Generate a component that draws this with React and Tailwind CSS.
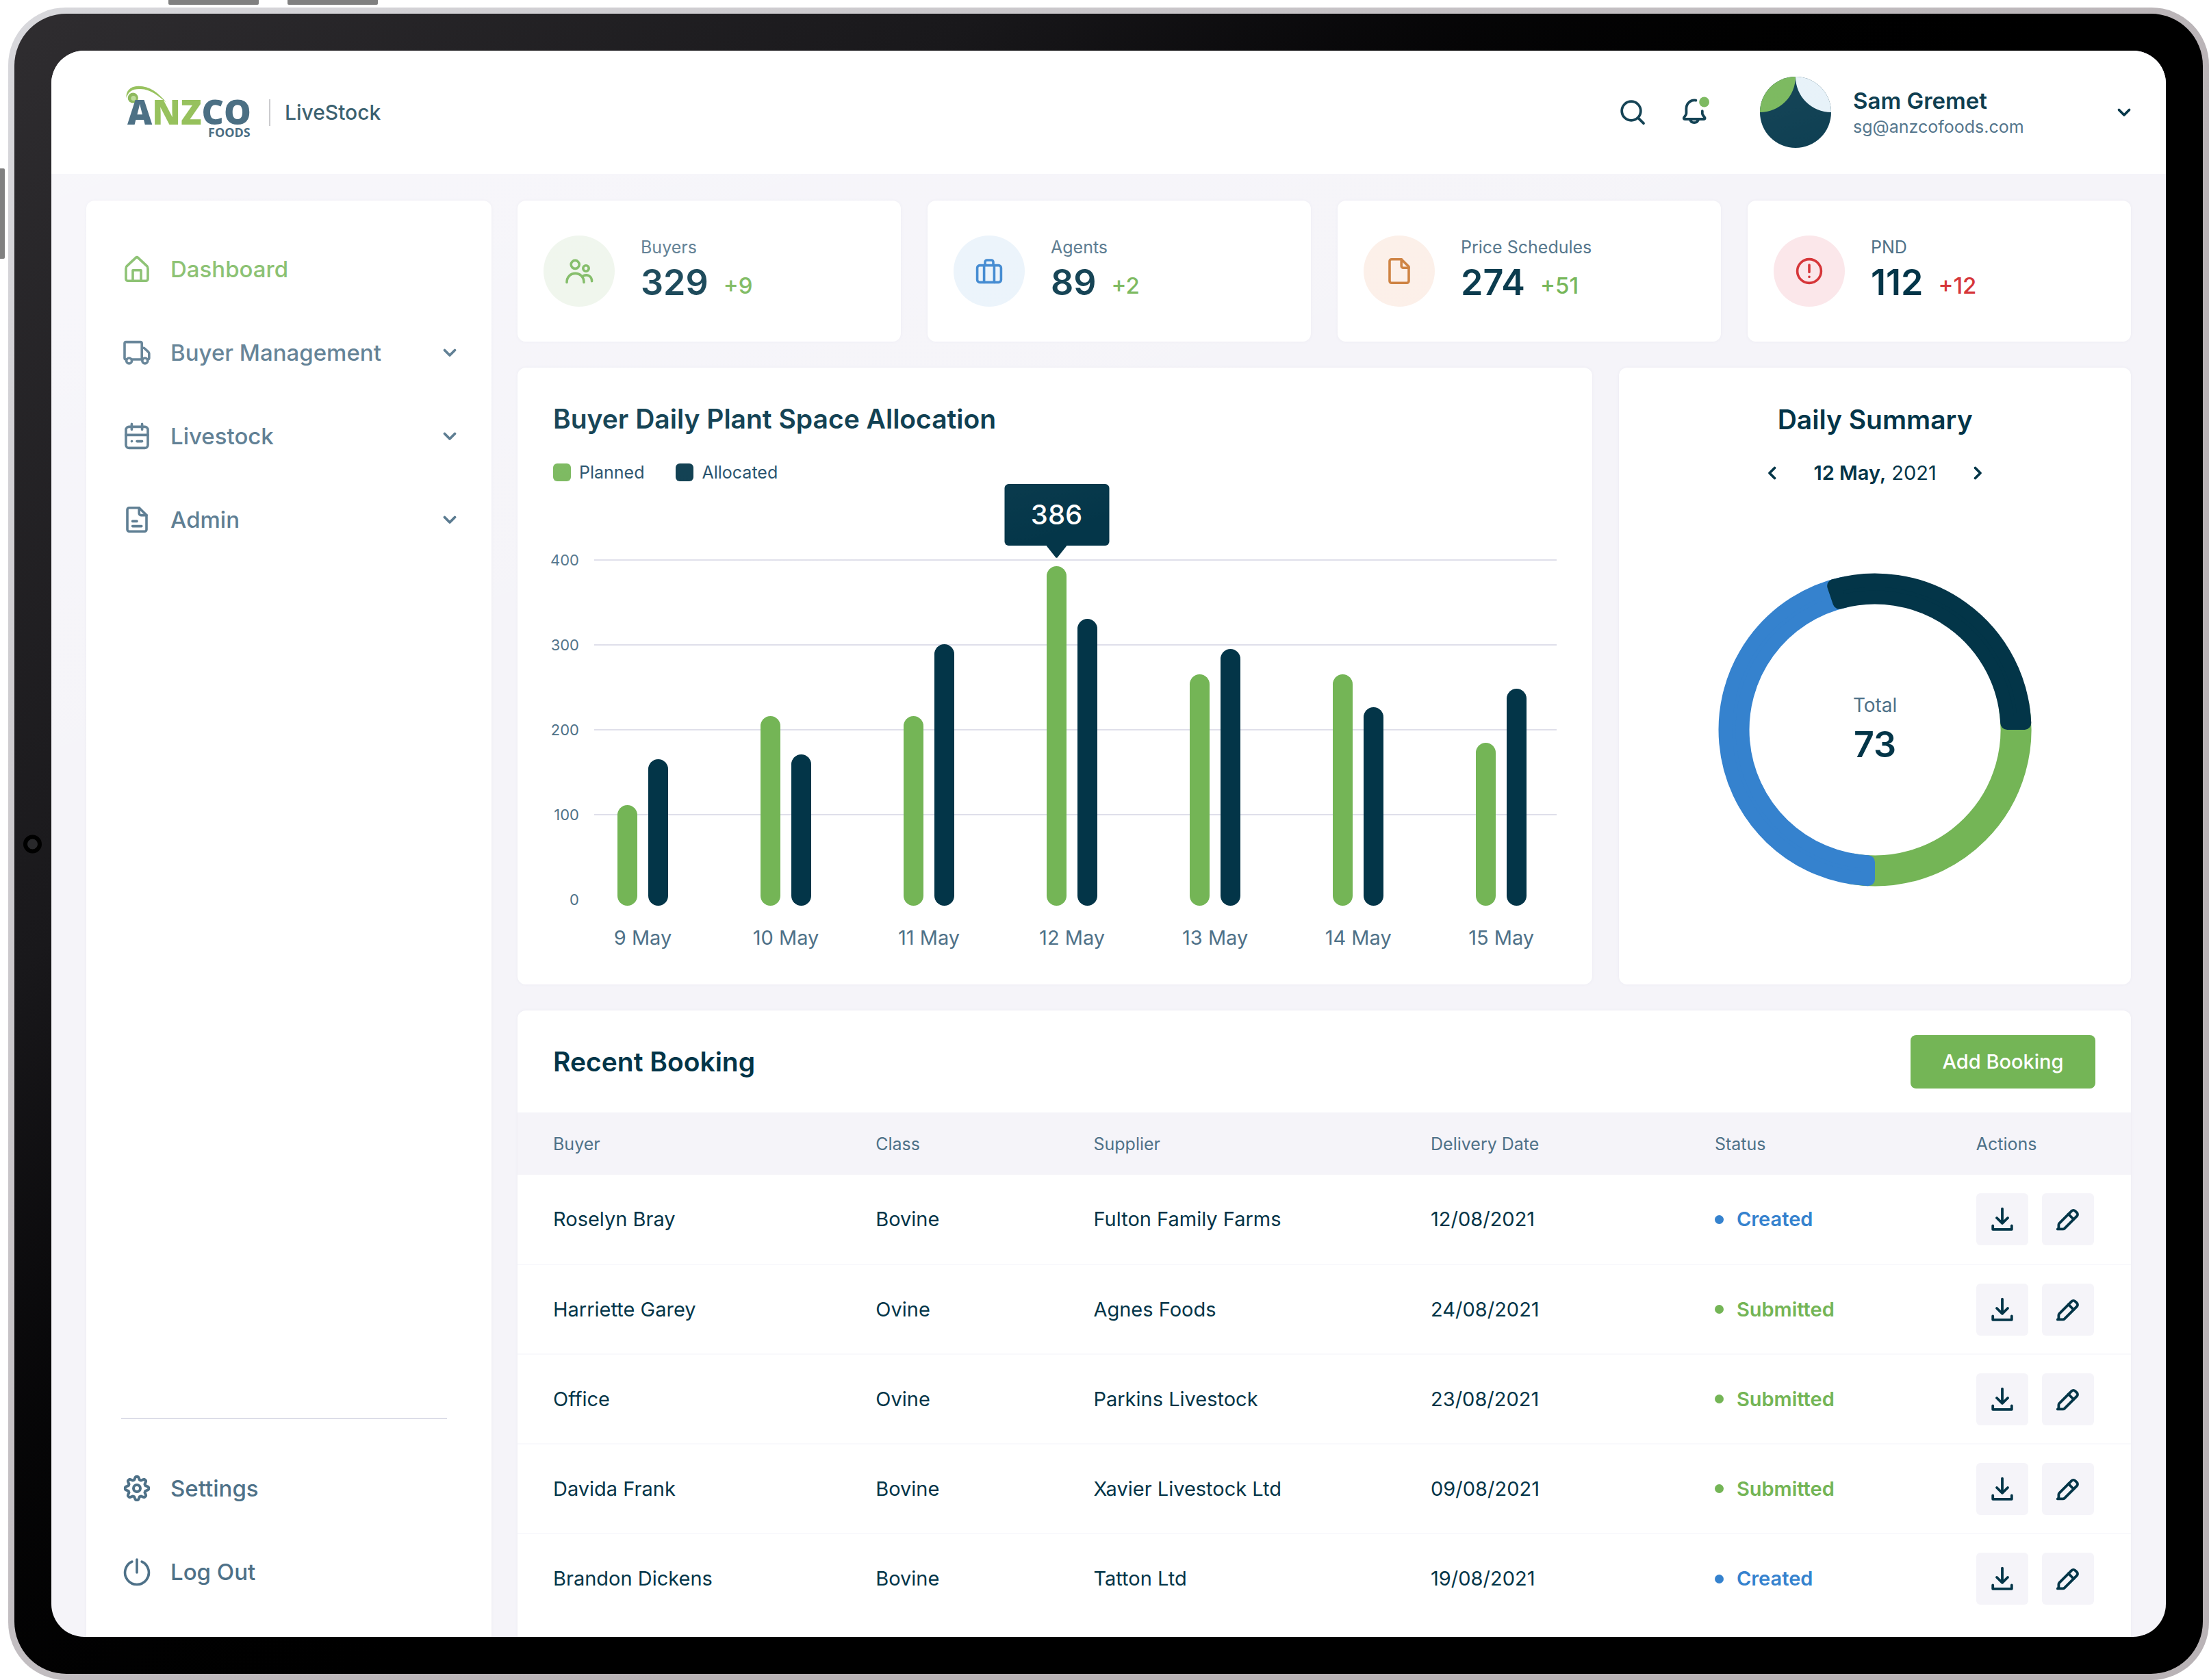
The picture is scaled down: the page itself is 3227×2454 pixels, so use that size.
const COLORS = { green: '#74b556', navy: '#033548', blue: '#3582ce' };

/* ---------- icons ---------- */

function Icon({ children, stroke = 1.8, className = 'size-12', ...rest }) {
  return (
    <svg
      viewBox="0 0 24 24"
      fill="none"
      stroke="currentColor"
      strokeWidth={stroke}
      strokeLinecap="round"
      strokeLinejoin="round"
      aria-hidden="true"
      className={`shrink-0 ${className}`}
      {...rest}
    >
      {children}
    </svg>
  );
}

const HomeIcon = () => (
  <Icon>
    <path d="M4 19.2v-7.5c0-.7.2-1.4.7-1.9l6.4-6a1.3 1.3 0 0 1 1.8 0l6.4 6c.5.5.7 1.2.7 1.9v7.5c0 .8-.6 1.4-1.4 1.4H5.400c-.8 0-1.4-.6-1.4-1.4Z" />
    <path d="M9 20.400v-7.500h6v7.500" />
  </Icon>
);

const TruckIcon = () => (
  <Icon>
    <path d="M4.300 17H4a1 1 0 0 1-1-1V5.300a1 1 0 0 1 1-1h10.600a1 1 0 0 1 1 1V17H8.300M15.600 8.600h1.100c.3 0 .6.1.8.3l3 2.800c.3.3.4.6.4 1V16a1 1 0 0 1-1 1" />
    <circle cx="6.3" cy="18" r="2" />
    <circle cx="17.9" cy="18" r="2" />
  </Icon>
);

const CalendarIcon = () => (
  <Icon>
    <rect x="4" y="5.2" width="16" height="15.5" rx="2.2" />
    <path d="M4 11.2h16M8.2 3.2v4M15.8 3.2v4M8.2 15.8h.1M12 15.8h3.8" />
  </Icon>
);

const FileTextIcon = () => (
  <Icon>
    <path d="M13.6 3.4H6.4c-.8 0-1.4.6-1.4 1.4v14.4c0 .8.6 1.4 1.4 1.4h11.2c.8 0 1.4-.6 1.4-1.4V8.8Z" />
    <path d="M13.6 3.4v4c0 .8.6 1.4 1.4 1.4h4M8.8 13.2h3.2M8.8 16.8h6.6" />
  </Icon>
);

const FileIcon = () => (
  <Icon>
    <path d="M13.6 3.4H6.4c-.8 0-1.4.6-1.4 1.4v14.4c0 .8.6 1.4 1.4 1.4h11.2c.8 0 1.4-.6 1.4-1.4V8.8Z" />
    <path d="M13.6 3.4v4.8c0 .8.6 1.4 1.4 1.4h4" />
  </Icon>
);

const gearPath = (() => {
  const points = [];
  for (let i = 0; i < 160; i += 1) {
    const a = (i / 160) * Math.PI * 2;
    const wave = Math.max(-1, Math.min(1, 1.35 * Math.cos(8 * a)));
    const r = 7.5 + 1.05 * wave;
    points.push(`${(12 + r * Math.sin(a)).toFixed(2)} ${(12 - r * Math.cos(a)).toFixed(2)}`);
  }
  return `M${points.join('L')}Z`;
})();

const GearIcon = () => (
  <Icon stroke={2}>
    <path d={gearPath} />
    <circle cx="12" cy="12" r="2.5" />
  </Icon>
);

const PowerIcon = () => (
  <Icon>
    <path d="M12 3v9.5M8.4 4.6a8.7 8.7 0 1 0 7.2 0" />
  </Icon>
);

const SearchIcon = () => (
  <Icon stroke={1.9}>
    <circle cx="11" cy="11" r="6.9" />
    <path d="m16 16.1 4 4" />
  </Icon>
);

const BellIcon = () => (
  <Icon stroke={1.9} className="size-12 overflow-visible">
    <path d="M13.2 3.3a6 6 0 0 0-7 5.9v3.4c0 .5-.1 1-.4 1.4l-1.3 1.9c-.3.5 0 1.1.6 1.1h14c.6 0 .9-.6.6-1.1L18.3 14c-.3-.4-.4-.9-.4-1.4v-1.5" />
    <path d="M8.9 17.2a3.2 3.2 0 0 0 6.2 0" />
    <circle cx="19.3" cy="4.5" r="3.7" fill={COLORS.green} stroke="none" />
  </Icon>
);

const UsersIcon = () => (
  <Icon>
    <circle cx="9.1" cy="7.2" r="3" />
    <circle cx="17" cy="10" r="2.1" />
    <path d="M3 20.2c0-3.9 2.7-6.5 6.2-6.5s6.3 2.6 6.3 6.5M15 15.500c3.600-1.500 6.300.4 6.300 3.900" />
  </Icon>
);

const BriefcaseIcon = () => (
  <Icon>
    <rect x="3.3" y="7.8" width="17.4" height="12.4" rx="1.8" />
    <path d="M9 7.8V5.400C9 4.600 9.600 4 10.400 4h3.200c.8 0 1.400.6 1.400 1.400v2.400M8.300 7.800v12.400M15.700 7.800v12.400" />
  </Icon>
);

const AlertIcon = () => (
  <Icon>
    <circle cx="12" cy="12" r="8.7" />
    <path d="M12 7.5v5.2M12 16.1v.1" />
  </Icon>
);

const DownloadIcon = () => (
  <Icon stroke={1.9}>
    <path d="M12 4.3v10.2M8 11l4 3.9 4-3.9M5.1 16.7v2.700h13.800v-2.700" />
  </Icon>
);

const PencilIcon = () => (
  <Icon stroke={1.9}>
    <path d="M5.200 19v-3c0-.4.200-.8.500-1.100l9-9a1.800 1.800 0 0 1 2.500 0l1.300 1.300a1.800 1.800 0 0 1 0 2.500l-9 9c-.3.300-.7.500-1.100.5h-4Z" />
    <path d="m12.300 8.200 3.800 3.800" />
  </Icon>
);

const ChevronDown = ({ className }) => (
  <svg
    viewBox="0 0 24 24"
    fill="none"
    stroke="currentColor"
    strokeWidth="3.8"
    strokeLinecap="round"
    strokeLinejoin="round"
    aria-hidden="true"
    className={`size-6 shrink-0 ${className ?? ''}`}
  >
    <path d="m4.500 8.500 7.500 7.500 7.500-7.500" />
  </svg>
);

/* ---------- header ---------- */

function Logo() {
  return (
    <svg viewBox="0 0 200 88" className="h-[88px] w-[200px]" role="img" aria-label="Anzco Foods">
      <path
        d="M4.700 23C3.500 14 9 6 22 5.700c16-.4 29 9.300 41 24-12-9.500-22-19.200-38-19.700C13 9.700 7.500 14 4.700 23Z"
        fill="#76ae2a"
      />
      <circle cx="14.300" cy="23" r="7.600" fill="#68a128" />
      <circle cx="15" cy="23.500" r="3.600" fill="#a9d17a" />
      <text x="6" y="62" fontFamily="Open Sans, sans-serif" fontWeight="800" fontSize="50" fill="#14435e">
        A<tspan fill="#76ae2a">NZ</tspan>CO
      </text>
      <text x="124" y="80" fontFamily="Open Sans, sans-serif" fontWeight="700" fontSize="18" fill="#14435e">
        FOODS
      </text>
    </svg>
  );
}

function Avatar() {
  return (
    <svg viewBox="0 0 104 104" className="size-[104px]" role="img" aria-label="Sam Gremet">
      <defs>
        <clipPath id="avatar-disc">
          <circle cx="52" cy="52" r="52" />
        </clipPath>
      </defs>
      <g clipPath="url(#avatar-disc)">
        <rect width="104" height="104" fill="#04374b" />
        <circle cx="0" cy="0" r="52" fill={COLORS.green} />
        <circle cx="104" cy="0" r="52" fill="#e6f1f9" />
      </g>
    </svg>
  );
}

function Header() {
  return (
    <header className="flex h-[180px] shrink-0 items-center bg-white pr-[49px] pl-[105px]">
      <Logo />
      <span className="ml-[13px] h-[39px] w-0.5 bg-[#bcbcc0]" />
      <span className="ml-[21px] text-[30px] leading-10 font-medium text-[#033548]">LiveStock</span>
      <div className="ml-auto flex items-center text-[#033548]">
        <button type="button" aria-label="Search">
          <SearchIcon />
        </button>
        <button type="button" aria-label="Notifications" className="ml-[42px]">
          <BellIcon />
        </button>
        <button type="button" className="ml-[72px] flex items-center text-left">
          <Avatar />
          <span className="ml-8 flex w-[384px] flex-col pt-1">
            <span className="text-[33px] leading-[38px] font-semibold">Sam Gremet</span>
            <span className="text-[25px] leading-[38px] text-[#4e7188]">sg@anzcofoods.com</span>
          </span>
          <ChevronDown />
        </button>
      </div>
    </header>
  );
}

/* ---------- sidebar ---------- */

const NAV = [
  { label: 'Dashboard', icon: HomeIcon, active: true },
  { label: 'Buyer Management', icon: TruckIcon },
  { label: 'Livestock', icon: CalendarIcon },
  { label: 'Admin', icon: FileTextIcon },
];

const rowClass =
  'flex h-[122px] w-full items-center gap-[25px] pr-[49px] pl-[50px] text-left text-[33px] leading-10 font-medium';

function Sidebar() {
  return (
    <aside className="flex w-[592px] shrink-0 flex-col rounded-t-xl bg-white pt-[39px] pb-[34px] shadow-[0_0_4px_#ebeaf2]">
      <nav className="flex flex-col">
        {NAV.map(({ label, icon: NavIcon, active }) =>
          active ? (
            <a key={label} href="#dashboard" aria-current="page" className={`${rowClass} text-[#74b556]`}>
              <NavIcon />
              {label}
            </a>
          ) : (
            <button key={label} type="button" className={`${rowClass} text-[#4e7188]`}>
              <NavIcon />
              {label}
              <ChevronDown className="ml-auto" />
            </button>
          )
        )}
      </nav>
      <div className="mt-auto">
        <hr className="mr-[65px] mb-10 ml-[51px] border-t-2 border-[#dcdde8]" />
        <a href="#settings" className={`${rowClass} text-[#4e7188]`}>
          <GearIcon />
          Settings
        </a>
        <button type="button" className={`${rowClass} text-[#4e7188]`}>
          <PowerIcon />
          Log Out
        </button>
      </div>
    </aside>
  );
}

/* ---------- stat cards ---------- */

const STATS = [
  { label: 'Buyers', value: '329', delta: '+9', icon: UsersIcon, disc: 'bg-[#eef5eb] text-[#74b556]', tone: 'text-[#74b556]' },
  { label: 'Agents', value: '89', delta: '+2', icon: BriefcaseIcon, disc: 'bg-[#eaf3fb] text-[#3582ce]', tone: 'text-[#74b556]' },
  { label: 'Price Schedules', value: '274', delta: '+51', icon: FileIcon, disc: 'bg-[#fcefe8] text-[#cc7d3a]', tone: 'text-[#74b556]' },
  { label: 'PND', value: '112', delta: '+12', icon: AlertIcon, disc: 'bg-[#fbe7ea] text-[#d63639]', tone: 'text-[#d63639]' },
];

const cardClass = 'rounded-xl bg-white shadow-[0_0_4px_#ebeaf2]';

function StatCard({ label, value, delta, icon: StatIcon, disc, tone }) {
  return (
    <section className={`${cardClass} flex h-[206px] items-center gap-[38px] pl-[38px]`}>
      <span className={`flex size-[104px] shrink-0 items-center justify-center rounded-full ${disc}`}>
        <StatIcon />
      </span>
      <div className="pb-1.5">
        <h3 className="text-[25px] leading-8 text-[#4e7188]">{label}</h3>
        <p className="mt-2 flex items-end gap-[22px]">
          <span className="text-[52px] leading-[56px] font-semibold text-[#033548]">{value}</span>
          <span className={`text-[33px] leading-[48px] font-medium ${tone}`}>{delta}</span>
        </p>
      </div>
    </section>
  );
}

/* ---------- bar chart ---------- */

const DAYS = [
  { day: '9 May', planned: 111, allocated: 165 },
  { day: '10 May', planned: 216, allocated: 171 },
  { day: '11 May', planned: 216, allocated: 301 },
  { day: '12 May', planned: 393, allocated: 331, tip: '386' },
  { day: '13 May', planned: 265, allocated: 295 },
  { day: '14 May', planned: 265, allocated: 227 },
  { day: '15 May', planned: 185, allocated: 248 },
];

const barHeight = (value) => Math.round(value * 1.24 + 9);

function Tooltip({ children }) {
  return (
    <span className="absolute bottom-full left-1/2 mb-3 flex -translate-x-1/2 flex-col items-center">
      <span className="flex h-[90px] w-[153px] items-center justify-center rounded-md bg-[#043649] text-[40px] leading-[48px] font-medium text-white">
        {children}
      </span>
      <svg viewBox="0 0 30 18" className="h-[18px] w-[30px]" aria-hidden="true">
        <path d="M0 0h30L16.500 17a2 2 0 0 1-3 0Z" fill="#043649" />
      </svg>
    </span>
  );
}

function BarChart() {
  return (
    <section className={`${cardClass} pt-[51px] pb-[50px]`}>
      <div className="px-[52px]">
        <h2 className="text-[39px] leading-[48px] font-semibold text-[#033548]">Buyer Daily Plant Space Allocation</h2>
        <ul className="mt-[38px] flex gap-[46px] text-[25px] leading-8 text-[#1c4a66]">
          <li className="flex items-center gap-3">
            <span className="size-[26px] rounded-md bg-[#74b556]" />
            Planned
          </li>
          <li className="flex items-center gap-3">
            <span className="size-[26px] rounded-md bg-[#033548]" />
            Allocated
          </li>
        </ul>
      </div>
      <div className="mt-24 flex gap-[22px] pr-[52px] pl-[47px]">
        <ul className="w-[43px] text-right text-[22px] leading-8 text-[#4e7188]">
          {[400, 300, 200, 100, 0].map((tick) => (
            <li key={tick} className="h-[124px] last:h-8">
              {tick}
            </li>
          ))}
        </ul>
        <div className="grid flex-1">
          <div className="col-start-1 row-start-1 pt-[15px]">
            {[400, 300, 200, 100].map((tick) => (
              <div key={tick} className="h-[124px] border-t-2 border-[#dfdfea]" />
            ))}
          </div>
          <div className="col-start-1 row-start-1 flex justify-between pr-11 pl-[34px]">
            {DAYS.map(({ day, planned, allocated, tip }) => (
              <div key={day} className="flex w-[74px] flex-col items-center">
                <div className="flex h-[521px] items-end gap-4">
                  <div className="relative w-[29px] rounded-full bg-[#74b556]" style={{ height: barHeight(planned) }}>
                    {tip && <Tooltip>{tip}</Tooltip>}
                  </div>
                  <div className="w-[29px] rounded-full bg-[#033548]" style={{ height: barHeight(allocated) }} />
                </div>
                <span className="mt-[29px] text-[29px] leading-9 whitespace-nowrap text-[#4e7188]">{day}</span>
              </div>
            ))}
          </div>
        </div>
      </div>
    </section>
  );
}

/* ---------- daily summary ---------- */

const polar = (r, deg, shift = 0) => {
  const a = ((deg - 90) * Math.PI) / 180 + shift / r;
  return `${(229 + r * Math.cos(a)).toFixed(1)} ${(229 + r * Math.sin(a)).toFixed(1)}`;
};

/* Ring segment; stroking it with a round join of 20 gives corners of radius 10. */
const segment = (from, to) => {
  const large = to - from > 180 ? 1 : 0;
  return `M${polar(218.5, from, 10)}A218.5 218.5 0 ${large} 1 ${polar(218.5, to, -10)}L${polar(193.5, to, -10)}A193.5 193.5 0 ${large} 0 ${polar(193.5, from, 10)}Z`;
};

function Donut() {
  return (
    <svg viewBox="0 0 458 458" className="col-start-1 row-start-1 size-[458px]" aria-hidden="true">
      <path d={`M${polar(206, 80)}A206 206 0 0 1 ${polar(206, 190)}`} fill="none" stroke={COLORS.green} strokeWidth="45" />
      <path d={segment(180, 350)} fill={COLORS.blue} stroke={COLORS.blue} strokeWidth="20" strokeLinejoin="round" />
      <path d={segment(341.5, 450)} fill={COLORS.navy} stroke={COLORS.navy} strokeWidth="20" strokeLinejoin="round" />
    </svg>
  );
}

function Summary() {
  return (
    <section className={`${cardClass} flex flex-col items-center pt-[52px]`}>
      <h2 className="text-[39px] leading-[48px] font-semibold text-[#033548]">Daily Summary</h2>
      <div className="mt-9 flex items-center gap-12 text-[29px] leading-9 text-[#033548]">
        <button type="button" aria-label="Previous day">
          <ChevronDown className="rotate-90" />
        </button>
        <p>
          <span className="font-semibold">12 May,</span> 2021
        </p>
        <button type="button" aria-label="Next day">
          <ChevronDown className="-rotate-90" />
        </button>
      </div>
      <div className="mt-32 grid place-items-center">
        <Donut />
        <div className="col-start-1 row-start-1 pb-1 text-center">
          <p className="text-[28px] leading-10 text-[#4e7188]">Total</p>
          <p className="mt-2 text-[52px] leading-[60px] font-semibold text-[#033548]">73</p>
        </div>
      </div>
    </section>
  );
}

/* ---------- bookings ---------- */

const COLUMNS = [
  ['Buyer', 'w-[22.2%] pl-[52px]'],
  ['Class', 'w-[13.5%]'],
  ['Supplier', 'w-[20.9%]'],
  ['Delivery Date', 'w-[17.6%]'],
  ['Status', 'w-[16.2%]'],
  ['Actions', ''],
];

const BOOKINGS = [
  ['Roselyn Bray', 'Bovine', 'Fulton Family Farms', '12/08/2021', 'Created'],
  ['Harriette Garey', 'Ovine', 'Agnes Foods', '24/08/2021', 'Submitted'],
  ['Office', 'Ovine', 'Parkins Livestock', '23/08/2021', 'Submitted'],
  ['Davida Frank', 'Bovine', 'Xavier Livestock Ltd', '09/08/2021', 'Submitted'],
  ['Brandon Dickens', 'Bovine', 'Tatton Ltd', '19/08/2021', 'Created'],
];

function Bookings() {
  return (
    <section className="flex-1 rounded-t-xl bg-white shadow-[0_0_4px_#ebeaf2]">
      <div className="flex h-[149px] items-center justify-between px-[52px]">
        <h2 className="text-[39px] leading-[48px] font-semibold text-[#033548]">Recent Booking</h2>
        <button type="button" className="h-[78px] w-[270px] rounded-lg bg-[#74b556] text-[29px] leading-9 font-medium text-white">
          Add Booking
        </button>
      </div>
      <table className="w-full table-fixed text-left">
        <thead>
          <tr className="h-[91px] bg-[#f5f4f9] text-[25px] leading-8 text-[#4e7188]">
            {COLUMNS.map(([label, width]) => (
              <th key={label} scope="col" className={`font-normal ${width}`}>
                {label}
              </th>
            ))}
          </tr>
        </thead>
        <tbody className="text-[29px] leading-9 text-[#033548]">
          {BOOKINGS.map(([buyer, kind, supplier, date, status]) => {
            const created = status === 'Created';
            return (
              <tr key={buyer} className="h-[131px] border-b-2 border-[#f9f9fc] last:border-b-0">
                <td className="pl-[52px]">{buyer}</td>
                <td>{kind}</td>
                <td>{supplier}</td>
                <td>{date}</td>
                <td>
                  <span
                    className={`flex items-center gap-[19px] font-semibold ${created ? 'text-[#3582ce]' : 'text-[#74b556]'}`}
                  >
                    <span className="size-[13px] rounded-full bg-current" />
                    {status}
                  </span>
                </td>
                <td>
                  <span className="flex gap-5">
                    <button
                      type="button"
                      aria-label={`Download booking of ${buyer}`}
                      className="flex size-[76px] items-center justify-center rounded-md bg-[#f5f4f9]"
                    >
                      <DownloadIcon />
                    </button>
                    <button
                      type="button"
                      aria-label={`Edit booking of ${buyer}`}
                      className="flex size-[76px] items-center justify-center rounded-md bg-[#f5f4f9]"
                    >
                      <PencilIcon />
                    </button>
                  </span>
                </td>
              </tr>
            );
          })}
        </tbody>
      </table>
    </section>
  );
}

/* ---------- page ---------- */

export default function App() {
  return (
    <div className="relative flex min-h-screen flex-col bg-white pt-[11px] pl-3 font-[Inter,sans-serif]">
      <span className="absolute top-0 left-[246px] h-[7px] w-[132px] rounded-b-xs bg-[#808080]" />
      <span className="absolute top-0 left-[420px] h-[7px] w-[132px] rounded-b-xs bg-[#808080]" />
      <span className="absolute top-[246px] left-0 h-[132px] w-[7px] rounded-r-xs bg-[#808080]" />
      <div className="flex flex-1 flex-col rounded-[84px] bg-linear-135 from-[#d8d8dc] to-[#b9b3b6] to-60% p-[9px]">
        <div className="relative flex flex-1 flex-col rounded-[76px] bg-linear-135 from-[#2f2d30] via-[#19181b] via-25% to-black to-55% p-[54px]">
          <span className="absolute top-1/2 left-[13px] size-[27px] -translate-y-1/2 rounded-full border-[6px] border-black bg-[#28282b]" />
          <div className="relative flex flex-1 flex-col overflow-hidden rounded-[48px] bg-[#f5f4f9]">
            <Header />
            <div className="flex flex-1 gap-[38px] pt-[39px] pr-[51px] pl-[51px]">
              <Sidebar />
              <main className="flex min-w-0 flex-1 flex-col gap-[38px]">
                <div className="grid grid-cols-4 gap-[39px]">
                  {STATS.map((stat) => (
                    <StatCard key={stat.label} {...stat} />
                  ))}
                </div>
                <div className="grid grid-cols-[21fr_10fr] gap-[39px]">
                  <BarChart />
                  <Summary />
                </div>
                <Bookings />
              </main>
            </div>
            <div className="pointer-events-none absolute inset-0 bg-[linear-gradient(161deg,#ffffff45_0%,#ffffff39_7%,#ffffff1d_19%,#ffffff10_28%,#ffffff00_36%)]" />
          </div>
        </div>
      </div>
    </div>
  );
}
